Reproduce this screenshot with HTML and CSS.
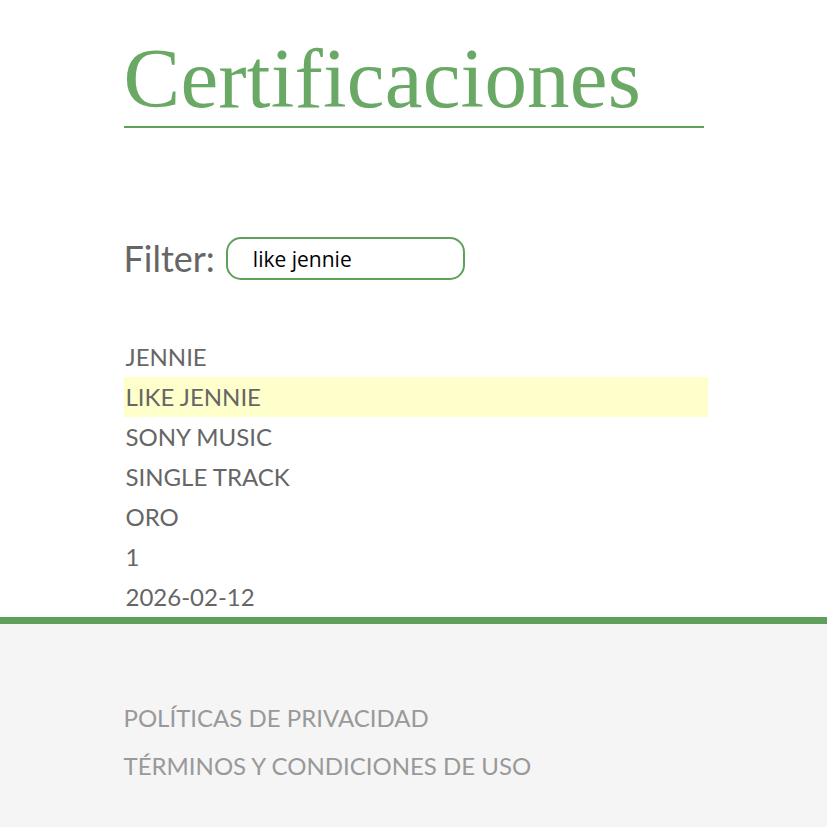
FILE: index.html
```html
<!DOCTYPE html>
<html lang="es">
<head>
<meta charset="utf-8">
<title>Certificaciones</title>
<link rel="stylesheet" href="styles.css">
</head>
<body>
<main class="page">
  <h1 class="title">Certificaciones</h1>
  <div class="filter">
    <label class="filter-label" for="q">Filter:</label>
    <input id="q" class="filter-input" type="text" value="like jennie">
  </div>
  <ul class="results">
    <li class="row">JENNIE</li>
    <li class="row row-hl">LIKE JENNIE</li>
    <li class="row">SONY MUSIC</li>
    <li class="row">SINGLE TRACK</li>
    <li class="row">ORO</li>
    <li class="row">1</li>
    <li class="row">2026-02-12</li>
  </ul>
</main>
<footer class="footer">
  <div class="footer-inner">
    <a class="footer-link" href="#">POLÍTICAS DE PRIVACIDAD</a>
    <a class="footer-link" href="#">TÉRMINOS Y CONDICIONES DE USO</a>
  </div>
</footer>
</body>
</html>
```
FILE: styles.css
```css
html, body {
  margin: 0;
  padding: 0;
  background: #ffffff;
}
body {
  font-family: "Lato", "Open Sans", sans-serif;
  color: #666666;
}
.page {
  width: 580px;
  margin: 0 auto;
  padding-top: 33px;
}
.title {
  margin: 0;
  font-family: "Liberation Serif", serif;
  font-weight: 400;
  font-size: 85px;
  line-height: 90px;
  color: #6aa865;
  border-bottom: 2px solid #5fa05a;
  padding-bottom: 3px;
  letter-spacing: 0.2px;
}
.filter {
  display: flex;
  align-items: center;
  margin-top: 109px;
  gap: 11px;
  height: 43px;
}
.filter-label {
  font-size: 36px;
  line-height: 43px;
  color: #666666;
}
.filter-input {
  box-sizing: border-box;
  width: 239px;
  height: 43px;
  border: 2px solid #5fa05a;
  border-radius: 15px;
  padding: 0 25px;
  font-family: "Open Sans", sans-serif;
  font-size: 21px;
  color: #000000;
  background: #ffffff;
  outline: none;
}
.results {
  list-style: none;
  margin: 57px 0 0 0;
  padding: 0;
  width: 584px;
}
.row {
  height: 40px;
  line-height: 40px;
  font-size: 24px;
  padding-left: 2px;
}
.row-hl {
  background: #ffffcc;
}
.footer {
  border-top: 7px solid #5fa05a;
  background: #f5f5f5;
  min-height: 220px;
}
.footer-inner {
  width: 580px;
  margin: 0 auto;
  padding-top: 77px;
  display: flex;
  flex-direction: column;
  gap: 14px;
}
.footer-link {
  font-size: 24px;
  color: #999999;
  text-decoration: none;
  line-height: 34px;
}
```
